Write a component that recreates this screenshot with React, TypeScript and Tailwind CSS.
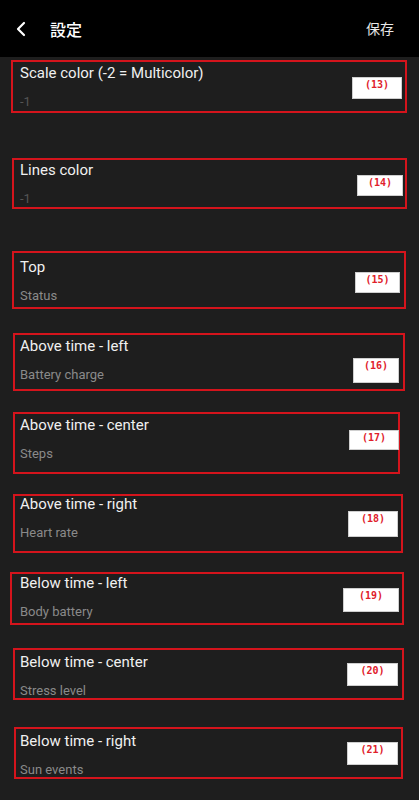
import { ChevronLeft } from "lucide-react";

const rows = [
  { title: "Scale color (-2 = Multicolor)", value: "-1", h: "h-[97px]", dim: true },
  { title: "Lines color", value: "-1", h: "h-[97px]", dim: true },
  { title: "Top", value: "Status", h: "h-[79px]" },
  { title: "Above time - left", value: "Battery charge", h: "h-[79px]" },
  { title: "Above time - center", value: "Steps", h: "h-[79px]" },
  { title: "Above time - right", value: "Heart rate", h: "h-[79px]" },
  { title: "Below time - left", value: "Body battery", h: "h-[79px]" },
  { title: "Below time - center", value: "Stress level", h: "h-[79px]" },
  { title: "Below time - right", value: "Sun events", h: "h-[79px]" },
];

// red annotation boxes drawn over the screenshot: [box, label]
const marks = [
  { n: 13, box: [11, 60, 396, 53], tag: [352, 77, 50, 22] },
  { n: 14, box: [12, 158, 395, 51], tag: [357, 175, 46, 21] },
  { n: 15, box: [12, 251, 394, 58], tag: [355, 272, 45, 21] },
  { n: 16, box: [13, 333, 392, 58], tag: [353, 358, 46, 25] },
  { n: 17, box: [13, 412, 387, 62], tag: [349, 430, 50, 20] },
  { n: 18, box: [13, 494, 390, 59], tag: [348, 511, 50, 26] },
  { n: 19, box: [10, 572, 394, 53], tag: [343, 588, 56, 24] },
  { n: 20, box: [13, 648, 391, 52], tag: [347, 663, 51, 23] },
  { n: 21, box: [14, 727, 389, 52], tag: [347, 742, 51, 23] },
];

export default function App() {
  return (
    <div className="relative w-[419px] h-[800px] overflow-hidden bg-[#1e1e1e] font-['Roboto','Noto_Sans_CJK_JP',sans-serif]">
      <div className="flex items-center h-[57px] bg-black px-[9px]">
        <ChevronLeft className="w-[24px] h-[24px] text-white" strokeWidth={2.2} />
        <span className="ml-[17px] text-[16px] font-medium text-white font-['Noto_Sans_CJK_JP',sans-serif]">設定</span>
        <span className="ml-auto mr-[16px] text-[14px] text-[#e8e8e8] font-['Noto_Sans_CJK_JP',sans-serif]">保存</span>
      </div>

      <div className="flex flex-col">
        {rows.map((r) => (
          <div key={r.title} className={`${r.h} px-[20px] pt-[6px]`}>
            <div className="text-[15px] leading-5 text-[#f0f0f0]">{r.title}</div>
            <div className={`mt-[10px] text-[13px] leading-[18px] ${r.dim ? "text-[#555]" : "text-[#8a8a8a]"}`}>{r.value}</div>
          </div>
        ))}
      </div>

      {marks.map((m) => (
        <Fragment key={m.n}>
          <div
            className="absolute border-2 border-[#d4141c]"
            style={{ left: m.box[0], top: m.box[1], width: m.box[2], height: m.box[3] }}
          />
          <div
            className="absolute bg-white border border-[#cfcfcf] flex justify-center pt-[1px]"
            style={{ left: m.tag[0], top: m.tag[1], width: m.tag[2], height: m.tag[3] }}
          >
            <span className="text-[10px] leading-[12px] font-bold text-[#e0202a] font-['DejaVu_Sans_Mono',monospace]">({m.n})</span>
          </div>
        </Fragment>
      ))}
    </div>
  );
}

import { Fragment } from "react";
